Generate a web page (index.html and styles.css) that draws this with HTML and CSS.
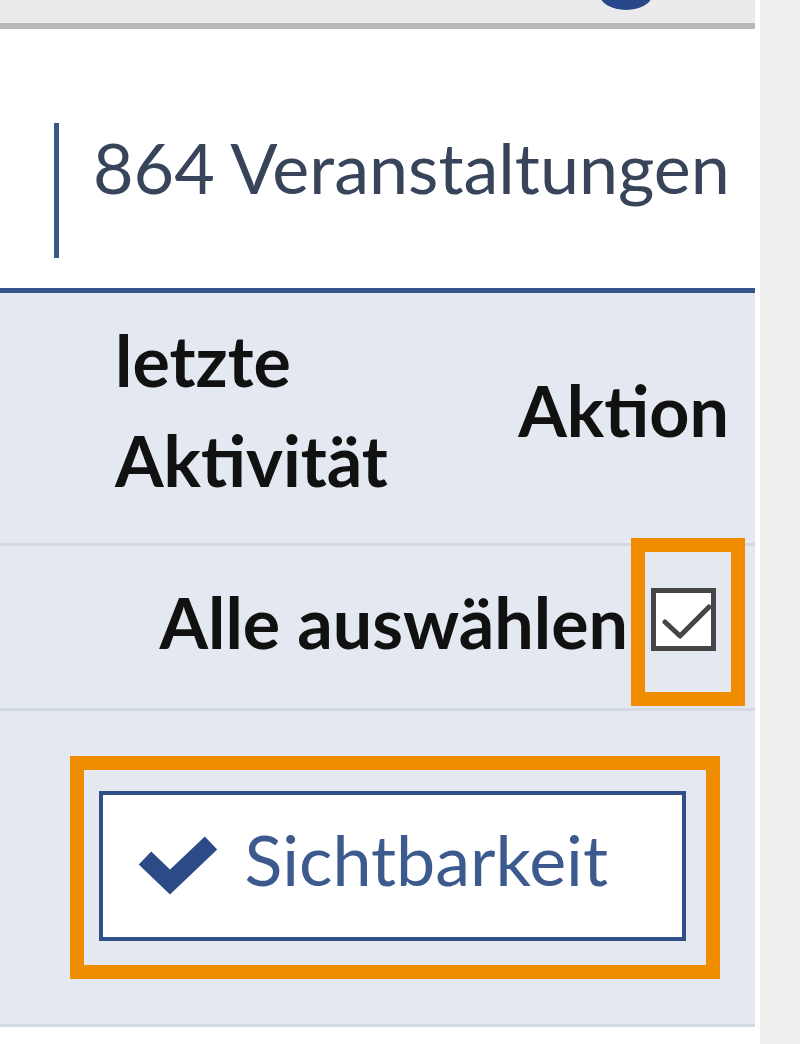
FILE: index.html
```html
<!DOCTYPE html>
<html lang="de">
  <head>
    <meta charset="UTF-8" />
    <title>Veranstaltungen</title>
    <link rel="stylesheet" href="styles.css">
  </head>
  <body>
    <div class="page">
      <main class="panel">
        <div class="topbar"><span class="avatar"></span></div>

        <div class="summary">
          <div class="count">864 Veranstaltungen</div>
        </div>

        <div class="table">
          <div class="row head">
            <div>letzte<br>Aktivität</div>
            <div>Aktion</div>
          </div>

          <div class="row select-row">
            <label class="select-all">
              <span>Alle auswählen</span>
              <span class="check-cell">
                <span class="box">
                  <svg width="55" height="53" viewBox="0 0 55 53">
                    <polyline points="9,29 24,43 53,14" fill="none" stroke="#464646" stroke-width="5" stroke-linecap="round" stroke-linejoin="round" />
                  </svg>
                </span>
              </span>
            </label>
          </div>

          <div class="row button-row">
            <div class="focus-wrap">
              <button class="btn" type="button">
                <svg width="84" height="64" viewBox="0 0 84 64">
                  <polyline points="9,24 34,48 75,9" fill="none" stroke="#2b4a86" stroke-width="18" stroke-linejoin="miter" />
                </svg>
                <span class="btn-label">Sichtbarkeit</span>
              </button>
            </div>
          </div>
        </div>
      </main>
      <aside class="side"></aside>
    </div>
  </body>
</html>
```

FILE: styles.css
```css
body {
  margin: 0;
  font-family: Lato, "Open Sans", sans-serif;
}

.page {
  display: flex;
  min-height: 1044px;
  background-color: white;
}

.panel {
  width: 755px;
  background-color: white;
}

.side {
  flex: 1;
  margin-left: 5px;
  background-color: #efefef;
}

.topbar {
  height: 23px;
  padding-left: 600px;
  background-color: #ebebeb;
  border-bottom: 6px solid #b9b9b9;
  overflow: hidden;
}

.avatar {
  display: block;
  width: 52px;
  height: 30px;
  margin-top: -20px;
  border-radius: 50%;
  background-color: #27478a;
}

.summary {
  padding: 94px 0 30px 54px;
  border-bottom: 5px solid #36558a;
}

.count {
  --bar: #3b5788;
  border-left: 5px solid var(--bar);
  padding: 2px 0 49px 34px;
  font-size: 70px;
  line-height: 84px;
  color: #38445a;
}

.table {
  background-color: #e4e8f0;
}

.row {
  border-bottom: 3px solid #d3d9e2;
}

.head {
  display: flex;
  justify-content: space-between;
  align-items: center;
  height: 200px;
  padding: 17px 26px 33px 115px;
  font-size: 70px;
  font-weight: bold;
  line-height: 100px;
  color: #111;
}

.select-row {
  display: flex;
  justify-content: flex-end;
  align-items: center;
  height: 152px;
  padding: 0 24px 10px 0;
}

.select-all {
  display: flex;
  align-items: center;
  font-size: 70px;
  font-weight: bold;
  line-height: 84px;
  color: #111;
}

.check-cell {
  display: flex;
  align-items: center;
  width: 80px;
  height: 135px;
  margin-left: 17px;
  padding: 0 0 5px 6px;
  outline: 14px solid #f08c00;
}

.box {
  display: block;
  width: 65px;
  height: 63px;
  box-sizing: border-box;
  border: 5px solid #464646;
  background-color: white;
}

.box svg {
  display: block;
}

.button-row {
  display: flex;
  justify-content: flex-end;
  align-items: center;
  height: 313px;
  padding-right: 49px;
}

.focus-wrap {
  padding: 21px 20px 24px 15px;
  outline: 14px solid #f08c00;
}

.btn {
  display: flex;
  align-items: center;
  gap: 25px;
  height: 150px;
  padding: 0 74px 0 33px;
  border: 4px solid #2f4f86;
  background-color: white;
  font-family: inherit;
  font-size: 70px;
  line-height: 84px;
  color: #3d5a8f;
  cursor: pointer;
}

.btn svg {
  flex: none;
}

.btn-label {
  margin-top: -14px;
}
```
